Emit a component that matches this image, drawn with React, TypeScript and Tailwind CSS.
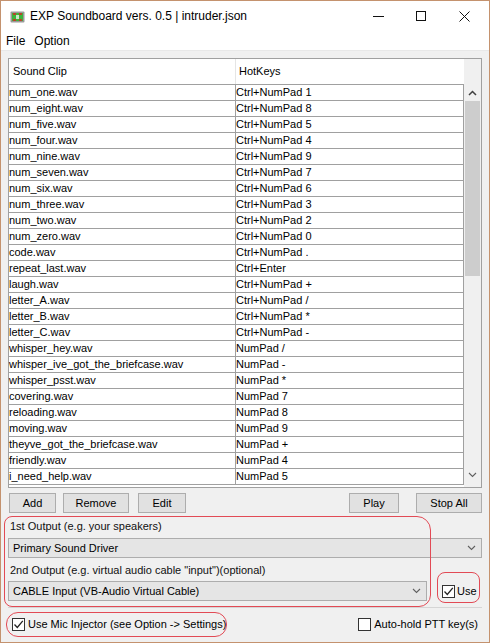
import React from "react";

const ROWS: [string, string][] = [
  ["num_one.wav", "Ctrl+NumPad 1"],
  ["num_eight.wav", "Ctrl+NumPad 8"],
  ["num_five.wav", "Ctrl+NumPad 5"],
  ["num_four.wav", "Ctrl+NumPad 4"],
  ["num_nine.wav", "Ctrl+NumPad 9"],
  ["num_seven.wav", "Ctrl+NumPad 7"],
  ["num_six.wav", "Ctrl+NumPad 6"],
  ["num_three.wav", "Ctrl+NumPad 3"],
  ["num_two.wav", "Ctrl+NumPad 2"],
  ["num_zero.wav", "Ctrl+NumPad 0"],
  ["code.wav", "Ctrl+NumPad ."],
  ["repeat_last.wav", "Ctrl+Enter"],
  ["laugh.wav", "Ctrl+NumPad +"],
  ["letter_A.wav", "Ctrl+NumPad /"],
  ["letter_B.wav", "Ctrl+NumPad *"],
  ["letter_C.wav", "Ctrl+NumPad -"],
  ["whisper_hey.wav", "NumPad /"],
  ["whisper_ive_got_the_briefcase.wav", "NumPad -"],
  ["whisper_psst.wav", "NumPad *"],
  ["covering.wav", "NumPad 7"],
  ["reloading.wav", "NumPad 8"],
  ["moving.wav", "NumPad 9"],
  ["theyve_got_the_briefcase.wav", "NumPad +"],
  ["friendly.wav", "NumPad 4"],
  ["i_need_help.wav", "NumPad 5"],
];

function Btn({ w, children }: { w: string; children: React.ReactNode }) {
  return (
    <div className={`${w} h-[20px] bg-[#e1e1e1] border border-[#adadad] flex items-center justify-center text-[11px] text-black`}>
      {children}
    </div>
  );
}

function Chevron({ dir = "down" }: { dir?: "down" | "up" }) {
  return (
    <svg width="9" height="6" viewBox="0 0 9 6">
      <path
        d={dir === "down" ? "M1 1 L4.5 4.5 L8 1" : "M1 5 L4.5 1.5 L8 5"}
        fill="none"
        stroke={dir === "down" ? "#606060" : "#404040"}
        strokeWidth={dir === "down" ? 1.1 : 1.5}
      />
    </svg>
  );
}

function Check({ on }: { on?: boolean }) {
  return (
    <div className="w-[13px] h-[13px] border border-[#333333] bg-white flex items-center justify-center shrink-0">
      {on && (
        <svg width="11" height="11" viewBox="0 0 11 11">
          <path d="M1.5 5.5 L4.3 8.5 L9.8 1.8" fill="none" stroke="#222" strokeWidth="1.3" />
        </svg>
      )}
    </div>
  );
}

export default function App() {
  const font = { fontFamily: '"Liberation Sans", Arial, sans-serif' };
  return (
    <div className="relative w-[490px] h-[643px] border border-[#c4926e] bg-[#f0f0f0] flex flex-col text-black overflow-hidden" style={font}>
      {/* title bar */}
      <div className="h-[30px] bg-white flex items-center shrink-0">
        <svg className="ml-[9px] mt-[1px]" width="15" height="14" viewBox="0 0 15 14">
          <rect x="0.5" y="1.5" width="14" height="11" rx="1" fill="#9a9a9a" />
          <rect x="2" y="3" width="11" height="8" fill="#3cb43c" />
          <path d="M3 4 L6 4 M3 10 L6 10 M9 4 L12 4 M9 10 L12 10" stroke="#e02020" strokeWidth="1.5" />
          <rect x="6" y="5" width="3" height="4" fill="#c8e8c8" />
        </svg>
        <span className="ml-[5px] text-[12px]">EXP Soundboard vers. 0.5 | intruder.json</span>
        <div className="ml-auto flex items-center">
          <div className="w-[11px] h-px bg-[#111] mr-[32px]" />
          <div className="w-[10px] h-[10px] border border-[#111] mr-[33px]" />
          <svg className="mr-[19px]" width="11" height="11" viewBox="0 0 11 11">
            <path d="M0.5 0.5 L10.5 10.5 M10.5 0.5 L0.5 10.5" stroke="#111" strokeWidth="1" />
          </svg>
        </div>
      </div>
      {/* menu */}
      <div className="h-[19px] bg-white flex items-center text-[12px] pl-[5px] gap-[9px] shrink-0">
        <span>File</span>
        <span>Option</span>
      </div>
      <div className="h-px bg-[#e8e8e8]" />

      <div className="pl-[7px] pr-[7px] pt-[7px] flex flex-col">
        {/* table */}
        <div className="h-[430px] border border-[#a0a0a0] bg-white flex text-[11px]">
          <div className="w-[455px] flex flex-col">
            <div className="h-[25px] flex items-center shrink-0">
              <div className="w-[227px] h-full flex items-center pl-[4px] border-r border-[#e5e5e5]">Sound Clip</div>
              <div className="pl-[3px]">HotKeys</div>
            </div>
            <div className="border-t border-[#a0a0a0]">
              {ROWS.map(([clip, key]) => (
                <div key={clip} className="h-[16px] flex border-b border-r border-[#a0a0a0] leading-[15px]">
                  <div className="w-[227px] border-r border-[#a0a0a0] whitespace-nowrap">{clip}</div>
                  <div className="whitespace-nowrap">{key}</div>
                </div>
              ))}
            </div>
          </div>
          <div className="flex-1 bg-[#f0f0f0] flex flex-col items-center">
            <div className="h-[25px] shrink-0" />
            <div className="h-[17px] flex items-center justify-center"><Chevron dir="up" /></div>
            <div className="w-[15px] h-[175px] bg-[#cdcdcd]" />
            <div className="flex-1" />
            <div className="h-[17px] flex items-center justify-center mb-[4px]"><Chevron dir="down" /></div>
          </div>
        </div>

        {/* buttons */}
        <div className="mt-[5px] flex items-center">
          <div className="ml-[1px]"><Btn w="w-[47px]">Add</Btn></div>
          <div className="ml-[7px]"><Btn w="w-[66px]">Remove</Btn></div>
          <div className="ml-[9px]"><Btn w="w-[48px]">Edit</Btn></div>
          <div className="ml-auto"><Btn w="w-[50px]">Play</Btn></div>
          <div className="ml-[17px]"><Btn w="w-[66px]">Stop All</Btn></div>
        </div>

        {/* outputs */}
        <div className="mt-[7px] text-[11px] leading-[13px] pl-[2px] text-[#111]">1st Output (e.g. your speakers)</div>
        <div className="mt-[5px] h-[20px] bg-[#e5e5e5] border border-[#adadad] flex items-center pl-[4px] text-[11px]">
          <span>Primary Sound Driver</span>
          <span className="ml-auto mr-[5px] flex"><Chevron /></span>
        </div>
        <div className="mt-[6px] text-[11px] leading-[13px] pl-[2px] text-[#111]">2nd Output (e.g. virtual audio cable "input")(optional)</div>
        <div className="mt-[4px] flex items-center">
          <div className="w-[419px] h-[20px] bg-[#e5e5e5] border border-[#adadad] flex items-center pl-[4px] text-[11px]">
            <span>CABLE Input (VB-Audio Virtual Cable)</span>
            <span className="ml-auto mr-[5px] flex"><Chevron /></span>
          </div>
          <div className="ml-[15px] flex items-center gap-[2px] text-[11px]">
            <Check on />
            <span>Use</span>
          </div>
        </div>
        <div className="mt-[6px] h-px bg-[#d5d5d5]" />

        {/* bottom */}
        <div className="mt-[8px] flex items-center text-[11px]">
          <div className="ml-[4px] flex items-center gap-[3px]">
            <Check on />
            <span>Use Mic Injector (see Option -&gt; Settings)</span>
          </div>
          <div className="ml-auto mr-[4px] flex items-center gap-[3px]">
            <Check />
            <span>Auto-hold PTT key(s)</span>
          </div>
        </div>
      </div>

      {/* red annotation outlines */}
      <div className="absolute left-[3px] top-[515px] w-[427px] h-[91px] border-[1.5px] border-[#e24a55] rounded-tl-[8px] rounded-bl-[8px] rounded-tr-[14px] rounded-br-[12px] pointer-events-none" />
      <div className="absolute left-[436px] top-[571px] w-[43px] h-[31px] border-[1.5px] border-[#e24a55] rounded-[8px] pointer-events-none" />
      <div className="absolute left-[5px] top-[611px] w-[221px] h-[25px] border-[1.5px] border-[#e24a55] rounded-[12px] pointer-events-none" />
    </div>
  );
}
